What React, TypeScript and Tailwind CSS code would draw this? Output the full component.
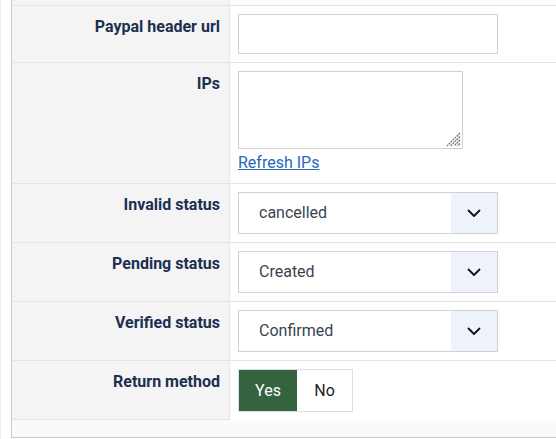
import React from "react";

function Chevron() {
  return (
    <svg width="14" height="9" viewBox="0 0 14 9" fill="none">
      <path d="M1.5 1.5 L7 7 L12.5 1.5" stroke="#111" strokeWidth="1.8" strokeLinecap="round" strokeLinejoin="round" />
    </svg>
  );
}

function ResizeGrip() {
  return (
    <svg width="15" height="15" viewBox="0 0 15 15" className="pointer-events-none absolute bottom-[2px] right-[2px]">
      <g stroke="#777" strokeWidth="1.4" strokeDasharray="2 0.8">
        <line x1="14" y1="1" x2="1" y2="14" />
        <line x1="14" y1="4.5" x2="4.5" y2="14" />
        <line x1="14" y1="8" x2="8" y2="14" />
        <line x1="14" y1="11.5" x2="11.5" y2="14" />
      </g>
    </svg>
  );
}

function FakeSelect({ value }: { value: string }) {
  return (
    <div className="flex h-[42px] w-[260px] border border-[#ccd1d6] bg-white">
      <div className="flex flex-1 items-center pl-5 text-[16px] text-[#3b4350]">{value}</div>
      <div className="flex w-[46px] items-center justify-center bg-[#eef3fb]">
        <Chevron />
      </div>
    </div>
  );
}

function Row({
  label,
  children,
  last = false,
}: {
  label: string;
  children: React.ReactNode;
  last?: boolean;
}) {
  return (
    <div className="flex">
      <div
        className={
          "w-[218px] shrink-0 border-r border-t border-[#e6e6e6] border-t-[#e4e4e4] bg-[#f4f4f4] pr-[9px] pt-[9px] text-right text-[16px] font-bold leading-6 text-[#1b2f4f] " +
          (last ? "border-b border-b-[#e4e4e4]" : "")
        }
      >
        {label}
      </div>
      <div className="flex-1 border-t border-[#e4e4e4] bg-white px-2 py-2">{children}</div>
    </div>
  );
}

export default function App() {
  return (
    <div className="flex h-[439px] w-full bg-white" style={{ fontFamily: "Roboto, 'Noto Sans', sans-serif" }}>
      <div className="w-px shrink-0 bg-[#edf1f6]" />
      <div className="ml-[10px] flex h-[438px] flex-1 flex-col border-b border-l border-[#cccccc] bg-[#fafafa]">
        <div className="flex h-[5px]">
          <div className="w-[218px] border-r border-[#e6e6e6] bg-[#f4f4f4]" />
          <div className="flex-1 bg-white" />
        </div>

        <Row label="Paypal header url">
          <input className="block h-[40px] w-[260px] border border-[#ccd1d6] bg-white outline-none" />
        </Row>

        <Row label="IPs">
          <div className="relative h-[78px] w-[225px]">
            <textarea className="block h-full w-full resize-none border border-[#ccd1d6] bg-white outline-none" />
            <ResizeGrip />
          </div>
          <a href="#" className="mt-[2px] block w-fit text-[16px] leading-6 text-[#2a69b8] underline">
            Refresh IPs
          </a>
        </Row>

        <Row label="Invalid status">
          <FakeSelect value="cancelled" />
        </Row>

        <Row label="Pending status">
          <FakeSelect value="Created" />
        </Row>

        <Row label="Verified status">
          <FakeSelect value="Confirmed" />
        </Row>

        <Row label="Return method" last>
          <div className="flex h-[43px] w-[115px] border border-[#dcdfe3] bg-white">
            <div className="flex w-[58px] items-center justify-center bg-[#36633f] text-[16px] text-white">Yes</div>
            <div className="flex flex-1 items-center justify-center text-[16px] text-[#1d1d1d]">No</div>
          </div>
        </Row>

        <div className="flex-1 bg-[#fafafa]" />
      </div>
    </div>
  );
}
